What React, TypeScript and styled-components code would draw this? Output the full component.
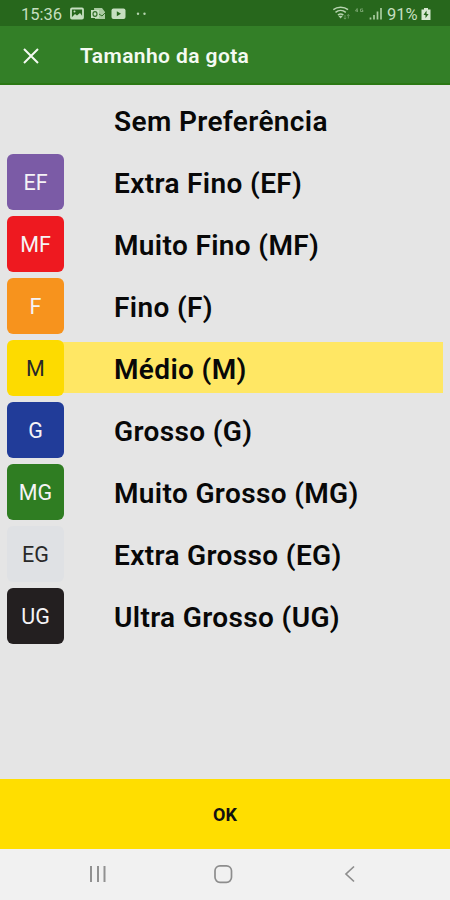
import React from "react";
import styled, { createGlobalStyle } from "styled-components";

const GlobalStyle = createGlobalStyle`
  * { box-sizing: border-box; }
  body { margin: 0; font-family: Roboto, sans-serif; background: #e5e5e5; }
  svg { display: block; flex: none; }
`;

const Screen = styled.div`
  width: 450px;
  height: 900px;
  display: flex;
  flex-direction: column;
  overflow: hidden;
  background: #e5e5e5;
`;

const StatusBar = styled.div`
  height: 26px;
  flex: none;
  display: flex;
  align-items: center;
  justify-content: space-between;
  padding: 2px 19px 0 21px;
  background: #27671c;
  color: #c6dfc0;
`;

const StatusGroup = styled.div`
  display: flex;
  align-items: center;
`;

const StatusText = styled.span<{ $width: number }>`
  width: ${(p) => p.$width}px;
  padding-top: 1px;
  font-size: 16.5px;
  line-height: 20px;
  white-space: nowrap;
`;

const AppBar = styled.header`
  height: 59px;
  flex: none;
  display: flex;
  align-items: center;
  padding: 2px 0 0 23px;
  background: #337f27;
  border-bottom: 2px solid #2b7814;
  color: #f4faf2;
`;

const Title = styled.h1`
  margin: 1px 0 0 41px;
  font-size: 21px;
  line-height: 28px;
  font-weight: 600;
  letter-spacing: 0.4px;
`;

const CloseButton = styled.button`
  padding: 0;
  border: 0;
  background: none;
  color: inherit;
`;

const OptionList = styled.div`
  flex: 1;
  padding: 4px 7px 0 7px;
  display: flex;
  flex-direction: column;
`;

const Row = styled.div<{ $selected?: boolean }>`
  height: 62px;
  flex: none;
  display: flex;
  align-items: center;
  background: ${(p) =>
    p.$selected
      ? "linear-gradient(#ffe764, #ffe764) 20px 5px / 416px 51px no-repeat"
      : "none"};
`;

const Swatch = styled.div<{ $color: string; $dark?: boolean }>`
  width: 57px;
  height: 56px;
  flex: none;
  display: flex;
  align-items: center;
  justify-content: center;
  border-radius: 6px;
  background: ${(p) => p.$color};
  color: ${(p) => (p.$dark ? "#292929" : "#f5f3f6")};
  font-size: 21.5px;
`;

const Label = styled.span`
  margin-left: 50px;
  padding-top: 3px;
  font-size: 28px;
  line-height: 36px;
  font-weight: 600;
  letter-spacing: 0.36px;
  color: #080808;
  white-space: nowrap;
`;

const OkButton = styled.button`
  height: 70px;
  flex: none;
  border: 0;
  padding: 2px 0 0;
  background: #ffde00;
  color: #111;
  font: 700 18px/24px Roboto, sans-serif;
`;

const NavBar = styled.nav`
  height: 51px;
  flex: none;
  display: flex;
  align-items: center;
  justify-content: space-between;
  padding: 0 94px 2px 87px;
  background: #f1f1f1;
`;

type Option = { code?: string; name: string; color: string; dark?: boolean; selected?: boolean };

const options: Option[] = [
  { name: "Sem Preferência", color: "transparent" },
  { code: "EF", name: "Extra Fino (EF)", color: "#7b5ba6" },
  { code: "MF", name: "Muito Fino (MF)", color: "#ee1920" },
  { code: "F", name: "Fino (F)", color: "#f7931d" },
  { code: "M", name: "Médio (M)", color: "#fddb00", dark: true, selected: true },
  { code: "G", name: "Grosso (G)", color: "#213c99" },
  { code: "MG", name: "Muito Grosso (MG)", color: "#2f7d22" },
  { code: "EG", name: "Extra Grosso (EG)", color: "#dfe1e4", dark: true },
  { code: "UG", name: "Ultra Grosso (UG)", color: "#231f20" },
];

const NotificationIcons = () => (
  <svg width="80" height="16" viewBox="0 0 80 16" fill="none">
    <rect x="1" y="2.5" width="12" height="10" rx="1" stroke="#c6dfc0" strokeWidth="1.8" />
    <path d="M2 11l3-3 2 1.5L10 7l3 4v1H2z" fill="#c6dfc0" />
    <circle cx="4.5" cy="5.5" r="1" fill="#c6dfc0" />
    <path d="M24 2h8l3 4v7H25z" fill="#a9cba1" />
    <path d="M21 4h8v8h-8z" fill="#c6dfc0" />
    <ellipse cx="25" cy="8" rx="2" ry="2.4" stroke="#34702a" strokeWidth="1.2" />
    <path d="M29 8l3 2 3-3" stroke="#34702a" />
    <rect x="41.5" y="2.5" width="14" height="10.5" rx="2" fill="#c6dfc0" />
    <path d="M46.8 5.2l4.2 2.5-4.2 2.5z" fill="#27671c" />
    <circle cx="68" cy="7.8" r="1.2" fill="#b5d3ae" />
    <circle cx="74.5" cy="7.8" r="1.2" fill="#b5d3ae" />
  </svg>
);

const SignalIcons = () => (
  <svg width="54" height="16" viewBox="0 0 54 16" fill="none">
    <g stroke="#b8d5b1" strokeWidth="1.5">
      <path d="M.3 3.7c4-3.3 10.7-3.3 14.7 0M2.5 6.4c3-2.4 7.3-2.4 10.3 0M4.9 9c1.8-1.4 3.7-1.4 5.5 0" />
    </g>
    <path d="M5.3 9.8h4.6L7.6 12.5z" fill="#b8d5b1" />
    <path d="M12 9v4m-1.2-1.2l1.2 1.4 1.2-1.4M15.3 12.5v-4m-1.2 1.4l1.2-1.4 1.2 1.4" stroke="#79a570" strokeWidth=".8" />
    <path d="M24 2.5L22.5 5H25M24.3 2.5V6M30 3h-2.5v2.5H30V4.5h-1" stroke="#79a570" strokeWidth=".9" />
    <path d="M37.5 11.5v2M41 9v4.5M44.5 5.5v8M48 2v11.5" stroke="#a9cc9e" strokeWidth="1.7" />
  </svg>
);

const BatteryIcon = () => (
  <svg width="10" height="14" viewBox="0 0 10 14">
    <path d="M3 1h4v1.5h2.5V13h-9V2.5H3z" fill="#d7e9d2" />
    <path d="M5.5 3.5L2.5 8h2v3.3L7.6 7h-2z" fill="#27671c" />
  </svg>
);

const CloseIcon = () => (
  <svg width="16" height="16" viewBox="0 0 16 16" stroke="currentColor" strokeWidth="2">
    <path d="M1 1l14 14M15 1L1 15" />
  </svg>
);

const RecentsIcon = () => (
  <svg width="20" height="18" viewBox="0 0 20 18" stroke="#919191" strokeWidth="2">
    <path d="M4 1v16M11 1v16M17.5 1v16" />
  </svg>
);

const HomeIcon = () => (
  <svg width="24" height="20" viewBox="0 0 24 20" fill="none" stroke="#8d8d8d" strokeWidth="1.7">
    <rect x="2" y="1.8" width="16.5" height="16.5" rx="5" />
  </svg>
);

const BackIcon = () => (
  <svg width="14" height="18" viewBox="0 0 14 18" fill="none" stroke="#8d8d8d" strokeWidth="1.7">
    <path d="M12 1.5L4 9l8 7.5" />
  </svg>
);

export default function App() {
  return (
    <Screen>
      <GlobalStyle />
      <StatusBar>
        <StatusGroup>
          <StatusText $width={49}>15:36</StatusText>
          <NotificationIcons />
        </StatusGroup>
        <StatusGroup>
          <SignalIcons />
          <StatusText $width={34}>91%</StatusText>
          <BatteryIcon />
        </StatusGroup>
      </StatusBar>
      <AppBar>
        <CloseButton aria-label="Fechar"><CloseIcon /></CloseButton>
        <Title>Tamanho da gota</Title>
      </AppBar>
      <OptionList>
        {options.map((o) => (
          <Row key={o.name} $selected={o.selected}>
            <Swatch $color={o.color} $dark={o.dark}>{o.code}</Swatch>
            <Label>{o.name}</Label>
          </Row>
        ))}
      </OptionList>
      <OkButton>OK</OkButton>
      <NavBar>
        <RecentsIcon />
        <HomeIcon />
        <BackIcon />
      </NavBar>
    </Screen>
  );
}
